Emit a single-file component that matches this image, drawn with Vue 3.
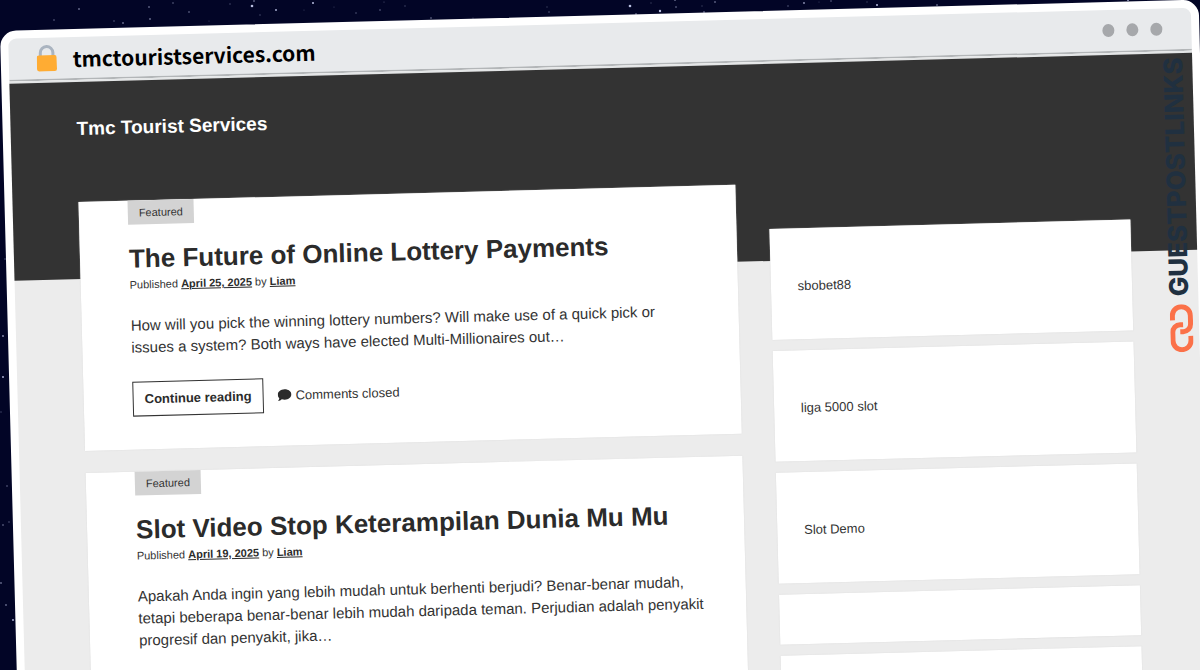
<script setup>
const posts = [
  {
    title: 'The Future of Online Lottery Payments',
    date: 'April 25, 2025',
    author: 'Liam',
    excerpt:
      'How will you pick the winning lottery numbers? Will make use of a quick pick or issues a system? Both ways have elected Multi-Millionaires out…',
    comments: 'Comments closed',
  },
  {
    title: 'Slot Video Stop Keterampilan Dunia Mu Mu',
    date: 'April 19, 2025',
    author: 'Liam',
    excerpt:
      'Apakah Anda ingin yang lebih mudah untuk berhenti berjudi? Benar-benar mudah, tetapi beberapa benar-benar lebih mudah daripada teman. Perjudian adalah penyakit progresif dan penyakit, jika…',
  },
]

const widgets = ['sbobet88', 'liga 5000 slot', 'Slot Demo', '', '']

// x, y, radius, opacity
const stars = [
  [79, 9, 0.8, 0.8], [54, 20, 0.8, 0.5], [114, 21, 0.7, 0.5], [123, 23, 0.8, 0.8], [149, 7, 0.8, 0.7],
  [150, 19, 0.8, 0.8], [173, 3, 0.7, 0.6], [189, 12, 0.8, 0.6], [209, 21, 0.6, 0.3], [230, 4, 0.7, 0.4],
  [252, 6, 1.3, 0.9], [254, 1, 0.8, 0.7], [260, 15, 0.7, 0.4], [276, 10, 1, 0.8], [304, 10, 0.6, 0.3],
  [313, 3, 1, 0.9], [334, 7, 0.6, 0.3], [356, 13, 0.8, 0.4], [380, 10, 0.8, 0.5], [384, 2, 0.6, 0.4],
  [405, 6, 0.8, 0.3], [431, 18, 0.8, 0.6], [473, 18, 0.6, 0.4], [547, 7, 0.7, 0.3], [549, 12, 0.8, 0.4],
  [630, 6, 1.3, 0.9], [636, 14, 0.8, 0.7], [651, 3, 0.7, 0.3], [660, 11, 1.2, 0.9], [675, 0, 0.8, 0.8],
  [676, 7, 0.8, 0.6], [702, 6, 0.7, 0.3], [704, 12, 0.8, 0.7], [715, 2, 0.8, 0.7], [788, 6, 0.7, 0.5],
  [804, 3, 0.9, 0.7], [819, 2, 0.6, 0.3], [831, 1, 0.8, 0.5], [867, 2, 0.7, 0.3], [877, 5, 1, 0.9],
  [937, 5, 0.8, 0.7], [1128, 0, 1, 0.8], [5, 259, 0.8, 0.4], [3, 336, 0.9, 0.7], [3, 377, 0.9, 0.9],
  [1, 412, 0.8, 0.3], [7, 486, 0.8, 0.5], [3, 525, 0.8, 0.6], [9, 522, 0.8, 0.4], [1, 583, 0.9, 0.5],
  [6, 605, 0.9, 0.5], [13, 620, 0.9, 0.9],
]
</script>

<template>
  <div class="sky">
    <svg class="stars" aria-hidden="true">
      <circle v-for="(s, i) in stars" :key="i" :cx="s[0]" :cy="s[1]" :r="s[2]" :opacity="s[3]" fill="#cdd3f5" />
    </svg>

    <div class="window">
      <div class="bar">
        <svg class="lock" viewBox="0 0 20 27" aria-hidden="true">
          <path d="M3.7 12V8a6.3 6.3 0 0 1 12.6 0v4" fill="none" stroke="#aab4c0" stroke-width="3" />
          <rect x="0" y="10.5" width="20" height="16" rx="2.2" fill="#ffac33" />
        </svg>
        <span class="domain">tmctouristservices.com</span>
        <span class="dots"><i></i><i></i><i></i></span>
      </div>

      <div class="site">
        <header class="site-header">
          <a class="site-title" href="#">Tmc Tourist Services</a>
        </header>

        <div class="columns">
          <main class="posts">
            <article v-for="post in posts" :key="post.title" class="post">
              <span class="tag">Featured</span>
              <h2>{{ post.title }}</h2>
              <p class="meta">
                Published <a href="#">{{ post.date }}</a> by <a href="#">{{ post.author }}</a>
              </p>
              <p class="excerpt">{{ post.excerpt }}</p>
              <div v-if="post.comments" class="actions">
                <a class="more" href="#">Continue reading</a>
                <span class="comments">
                  <svg viewBox="0 0 14 13" aria-hidden="true">
                    <path
                      d="M7 .6c3.8 0 6.8 2.3 6.8 5.2S10.8 11 7 11c-1 0-1.9-.15-2.8-.45C3.2 11.4 1.8 12.1.3 12.1c.8-.9 1.2-1.8 1.3-2.7C.7 8.4.2 7.2.2 5.8.2 2.9 3.2.6 7 .6z"
                      fill="#2b2b2b"
                    />
                  </svg>
                  {{ post.comments }}
                </span>
              </div>
            </article>
          </main>

          <aside class="widgets">
            <section v-for="(name, i) in widgets" :key="i" class="widget" :class="{ empty: !name }">
              <a v-if="name" href="#">{{ name }}</a>
            </section>
          </aside>
        </div>
      </div>

      <div class="brand">
        <span>GUESTPOSTLINKS</span>
        <svg viewBox="0 0 23 48" aria-hidden="true">
          <g fill="none" stroke="#fb7149" stroke-width="5">
            <path d="M2.5 16v-4.500a9 9 0 0 1 18 0V20a7.500 7.500 0 0 1-7.500 7.500H10" />
            <path d="M20.500 32v4.500a9 9 0 0 1-18 0V28a7.500 7.500 0 0 1 7.500-7.500H13" />
          </g>
        </svg>
      </div>
    </div>
  </div>
</template>

<style>
body {
  margin: 0;
}
</style>

<style scoped>
.sky {
  position: relative;
  height: 100vh;
  overflow: hidden;
  box-sizing: border-box;
  padding-top: 31px;
  background: #020526;
  font-family: 'Liberation Sans', Arial, sans-serif;
  color: #333;
}

.stars {
  position: absolute;
  inset: 0;
  width: 100%;
  height: 100%;
}

.window {
  position: relative;
  min-height: 110vh;
  margin-right: 1px;
  border: 8px solid #fff;
  border-radius: 16px;
  box-sizing: border-box;
  background: #fff;
  transform: rotate(-1.5deg);
  transform-origin: 0 0;
}

.bar {
  display: flex;
  align-items: center;
  height: 43px;
  box-sizing: border-box;
  padding: 0 29px 0 28px;
  border-bottom: 2px solid #b3b6b8;
  border-radius: 8px 8px 0 0;
  background: #e8eaec;
}

.lock {
  width: 20px;
  height: 27px;
}

.domain {
  margin-left: 16px;
  font: 700 21px/40px 'Noto Sans CJK JP', 'Noto Sans', sans-serif;
  color: #000;
}

.dots {
  display: flex;
  gap: 12px;
  margin-left: auto;
}

.dots i {
  width: 12px;
  height: 13px;
  border-radius: 50%;
  background: #a6a8ab;
}

.site {
  border-top: 2px solid #e4e6e7;
  min-height: 110vh;
  background: #ececec;
}

.site-header {
  height: 197px;
  box-sizing: border-box;
  padding: 35px 66px;
  background: #333;
}

.site-title {
  font-size: 19px;
  line-height: 24px;
  font-weight: 700;
  color: #fff;
  text-decoration: none;
}

.columns {
  display: grid;
  grid-template-columns: minmax(0, 20fr) minmax(0, 11fr);
  gap: 33px;
  margin-top: -77px;
  padding: 0 66px;
}

.posts {
  display: flex;
  flex-direction: column;
  gap: 22px;
}

.post,
.widget {
  background: #fff;
  box-shadow: 0 0 1px #ccc;
}

.post {
  padding: 0 40px 33px 49px;
}

.post:last-child {
  flex: 1;
}

.tag {
  display: block;
  width: fit-content;
  padding: 0 11px;
  font-size: 11px;
  line-height: 24px;
  background: #d3d3d3;
}

h2 {
  margin: 19px 0 3px;
  font-size: 26px;
  line-height: 30px;
  color: #2b2b2b;
}

.meta {
  margin: 0 0 22px;
  font-size: 11px;
  line-height: 16px;
}

.meta a {
  font-weight: 700;
  color: #2b2b2b;
}

.excerpt {
  margin: 0 0 23px;
  font-size: 15px;
  line-height: 22px;
}

.actions {
  display: flex;
  align-items: center;
  gap: 14px;
  font-size: 13px;
}

.more {
  padding: 0 11px;
  border: 1px solid #333;
  line-height: 33px;
  font-weight: 700;
  color: #2b2b2b;
  text-decoration: none;
}

.comments {
  display: flex;
  align-items: center;
  gap: 4px;
}

.comments svg {
  width: 14px;
  height: 13px;
}

.widgets {
  display: flex;
  flex-direction: column;
  gap: 11px;
  padding-top: 45px;
}

.widget {
  padding: 49px 27px 44px;
  font-size: 13px;
  line-height: 18px;
}

.widget.empty {
  padding: 25px;
  line-height: 0;
}

.widget a {
  color: #333;
  text-decoration: none;
}

.brand {
  position: absolute;
  top: 49px;
  right: 6px;
  display: flex;
  flex-direction: column;
  align-items: flex-start;
  gap: 8px;
}

.brand span {
  writing-mode: vertical-rl;
  transform: rotate(180deg);
  font: 800 26px/20px Inter, sans-serif;
  color: #203040;
}

.brand svg {
  width: 23px;
  height: 48px;
}
</style>
